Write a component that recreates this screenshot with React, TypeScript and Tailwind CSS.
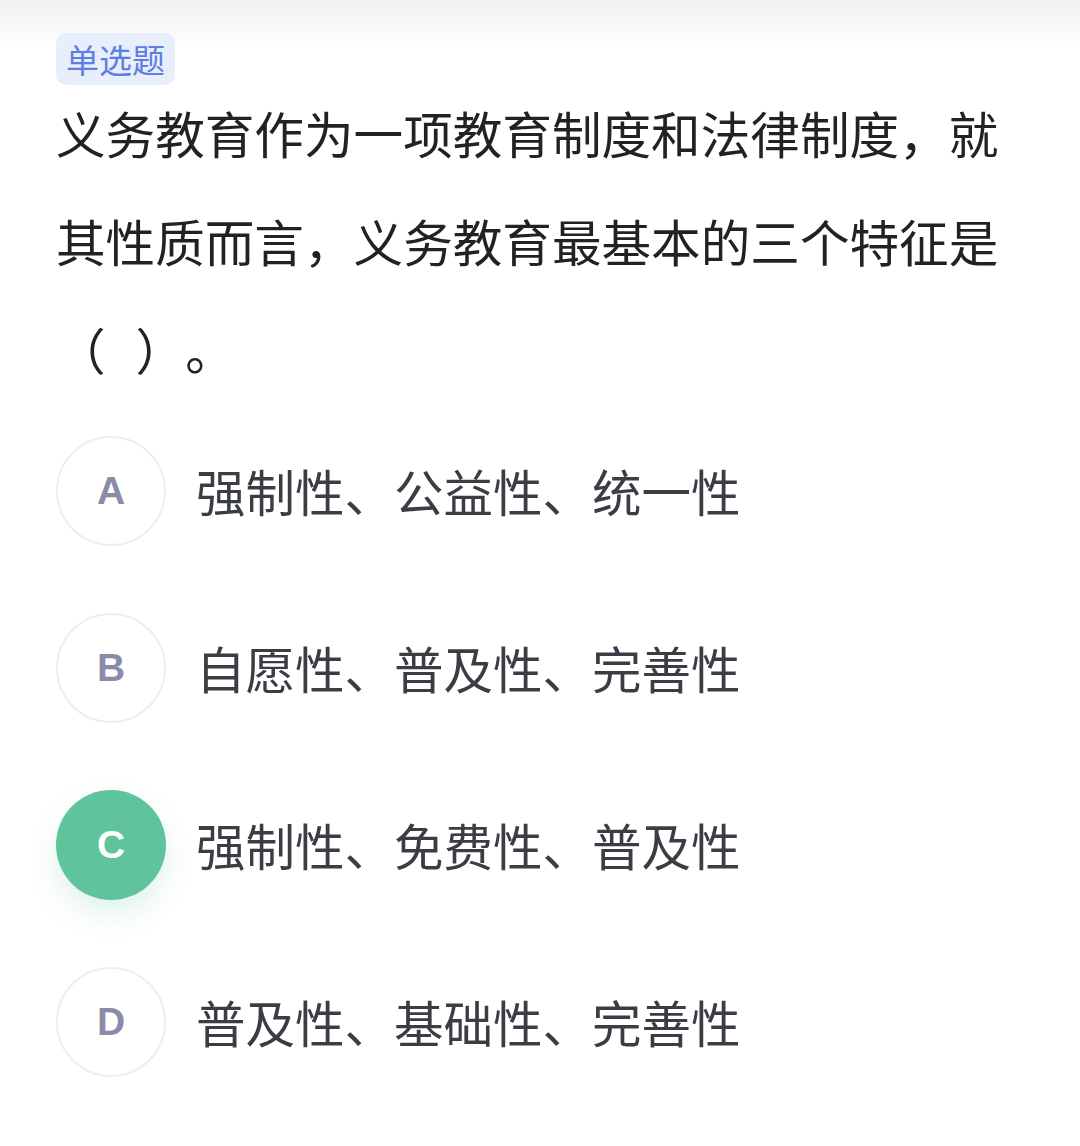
const options = [
  { key: 'A', text: '强制性、公益性、统一性', active: false },
  { key: 'B', text: '自愿性、普及性、完善性', active: false },
  { key: 'C', text: '强制性、免费性、普及性', active: true },
  { key: 'D', text: '普及性、基础性、完善性', active: false },
];

export default function App() {
  return (
    <div
      className="w-[1080px] h-[1146px] overflow-hidden bg-[linear-gradient(#f1f1f3,#ffffff_50px)]"
      style={{ fontFamily: '"Noto Sans CJK SC", "Noto Sans", sans-serif' }}
    >
      <div className="pl-[56px] pt-[33px]">
        {/* tag */}
        <div className="inline-flex items-center h-[52px] px-[10px] rounded-[10px] bg-[#e9eefc] text-[#5b7fe2] text-[33px] leading-none">
          单选题
        </div>

        {/* question */}
        <div className="-mt-[7px] w-[960px] text-[49.6px] leading-[108px] text-[#222222] [text-spacing-trim:space-all]">
          义务教育作为一项教育制度和法律制度，就其性质而言，义务教育最基本的三个特征是（<span className="inline-block w-[30px]" />）。
        </div>

        {/* options */}
        <div className="flex flex-col">
          {options.map((o) => (
            <div key={o.key} className="flex items-center h-[177px]">
              <div
                className={
                  o.active
                    ? 'flex items-center justify-center w-[110px] h-[110px] rounded-full bg-[#5fc39b] text-white shadow-[0_14px_30px_rgba(95,195,155,0.2)]'
                    : 'flex items-center justify-center w-[110px] h-[110px] rounded-full border-2 border-[#eeeef1] bg-white text-[#8a8ba7]'
                }
              >
                <span
                  className="text-[39px] font-bold leading-none"
                  style={{ fontFamily: '"Liberation Sans", Arial, sans-serif' }}
                >
                  {o.key}
                </span>
              </div>
              <div className="ml-[30px] text-[49.5px] text-[#3a3e44] leading-none">{o.text}</div>
            </div>
          ))}
        </div>
      </div>
    </div>
  );
}
